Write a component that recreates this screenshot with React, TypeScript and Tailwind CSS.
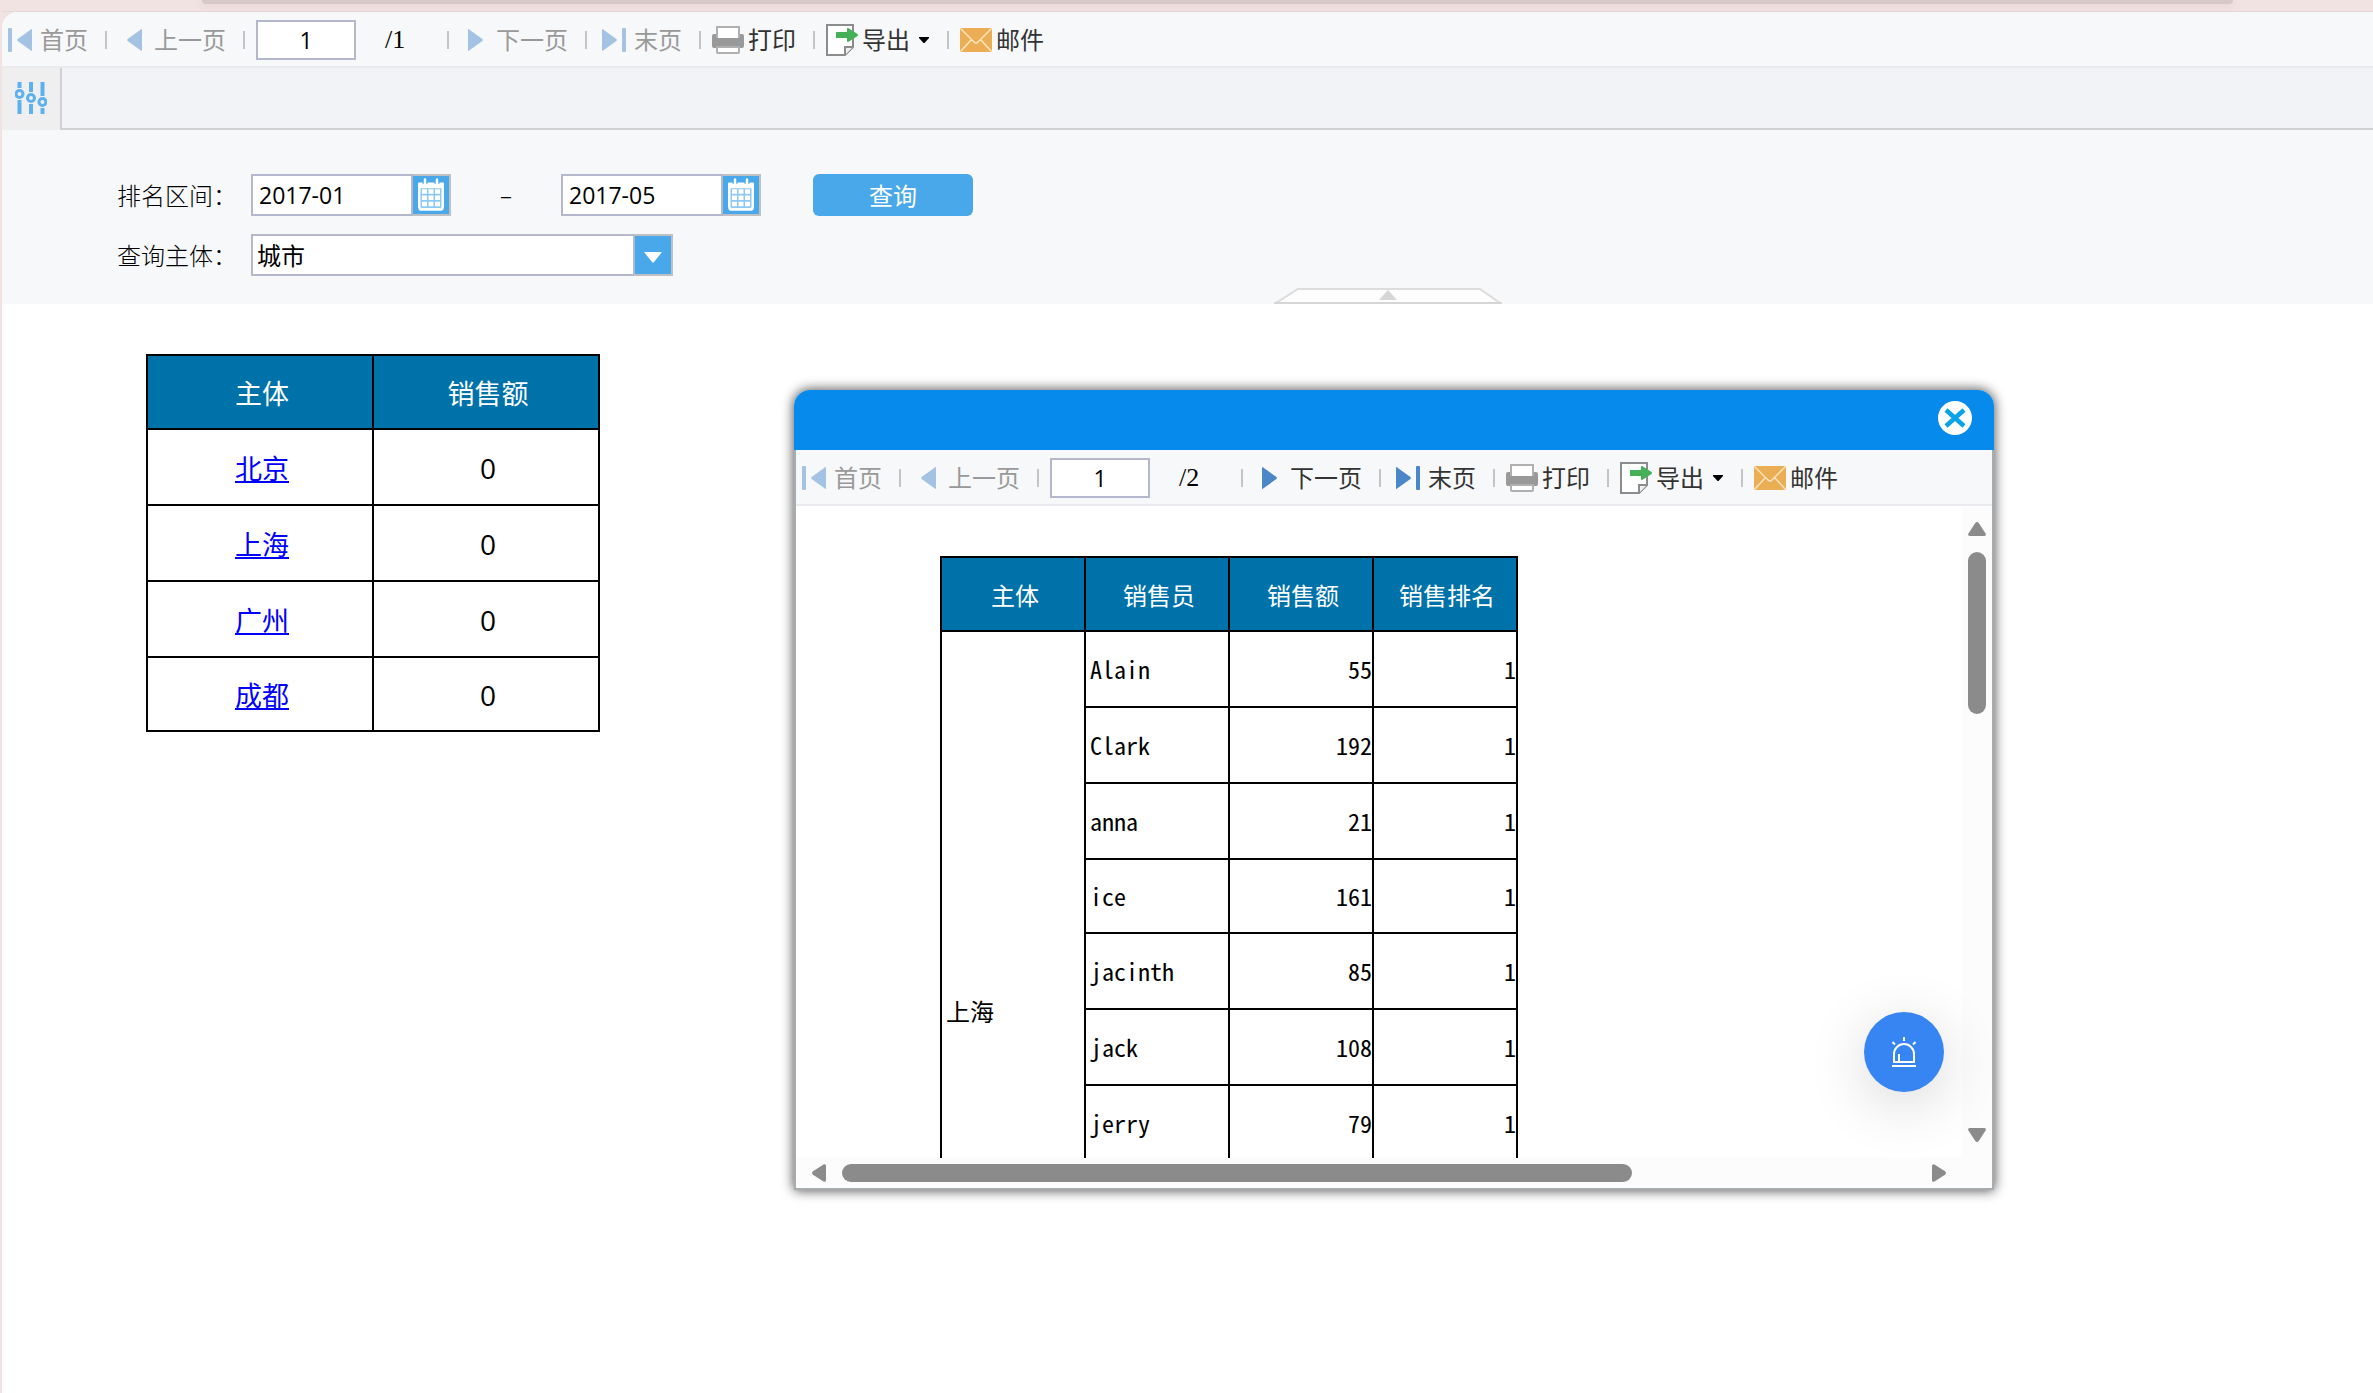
import type { ReactNode } from "react";
import clsx from "clsx";

const cities = ["北京", "上海", "广州", "成都"];

const sellers = [
    { name: "Alain", amount: 55, rank: 1 },
    { name: "Clark", amount: 192, rank: 1 },
    { name: "anna", amount: 21, rank: 1 },
    { name: "ice", amount: 161, rank: 1, short: true },
    { name: "jacinth", amount: 85, rank: 1 },
    { name: "jack", amount: 108, rank: 1 },
    { name: "jerry", amount: 79, rank: 1 },
];

function Icon({ children }: { children: ReactNode }) {
    return (
        <svg viewBox="0 0 32 32" className="size-8 shrink-0" aria-hidden="true">
            {children}
        </svg>
    );
}

function FirstIcon() {
    return (
        <Icon>
            <rect x="4" y="4" width="4" height="24" rx="1" fill="currentColor" />
            <path d="M28 5.5v21q0 .8-.8.3L13.6 17q-1-1 0-2L27.2 5.2q.8-.5.8.3z" fill="currentColor" />
        </Icon>
    );
}

function PrevIcon() {
    return (
        <Icon>
            <path d="M24 5.5v21q0 .8-.8.3L9.6 17q-1-1 0-2L23.2 5.2q.8-.5.8.3z" fill="currentColor" />
        </Icon>
    );
}

function NextIcon() {
    return (
        <Icon>
            <path d="M8 5.5v21q0 .8.8.3L22.4 17q1-1 0-2L8.8 5.2Q8 4.7 8 5.5z" fill="currentColor" />
        </Icon>
    );
}

function LastIcon() {
    return (
        <Icon>
            <path d="M4 5.5v21q0 .8.8.3L18.4 17q1-1 0-2L4.8 5.2q-.8-.5-.8.3z" fill="currentColor" />
            <rect x="24" y="4" width="4" height="24" rx="1" fill="currentColor" />
        </Icon>
    );
}

function PrintIcon() {
    return (
        <Icon>
            <path d="M0 12q0-2 2-2h28q2 0 2 2v10q0 2-2 2H2q-2 0-2-2z" fill="#999" />
            <path d="M4 2h24v12H4z" fill="#b0b0b0" />
            <path d="M6 4h20v10H6z" fill="#fff" />
            <path d="M4 22h24v6q0 2-2 2H6q-2 0-2-2z" fill="#b0b0b0" />
            <path d="M6 24h20v4H6z" fill="#fff" />
        </Icon>
    );
}

function ExportIcon() {
    return (
        <Icon>
            <path d="M1 1h26v22l-8 8H1z" fill="#fff" stroke="#8c8c8c" strokeWidth="2" />
            <path d="M19 31v-8h8" fill="#f0f0f0" stroke="#8c8c8c" strokeWidth="2" />
            <path d="M10 8h11V4.5q1-.8 2 0L31.500 10q1 1 0 2L23 17.500q-1 .8-2 0V14H10z" fill="#45b058" />
        </Icon>
    );
}

function MailIcon() {
    return (
        <Icon>
            <rect y="4" width="32" height="24" rx="2" fill="#ebae55" />
            <path d="M1 5l13 13q2 2 4 0L31 5M1 27l10.5-11.5M31 27L20.5 15.5" fill="none" stroke="#fbe6c4" strokeWidth="1.4" />
        </Icon>
    );
}

function CalendarIcon() {
    return (
        <svg viewBox="0 0 28 30" className="h-[34px] w-7" preserveAspectRatio="none" aria-hidden="true">
            <path d="M2 4h24q1 0 1 1v20q0 4-3 4H4q-3 0-3-4V5q0-1 1-1z" fill="#fff" />
            <path d="M3.5 9h21v16q0 1.5-1 1.5h-19q-1 0-1-1.5z" fill="#8cc9f3" />
            <path d="M5 10h5v4H5zM11.5 10h5v4h-5zM18 10h5v4h-5zM5 15.5h5v4H5zM11.5 15.5h5v4h-5zM18 15.5h5v4h-5zM5 21h5v4H5zM11.5 21h5v4h-5zM18 21h5v4h-5z" fill="#fff" />
            <path d="M8 1v4M20 1v4" stroke="#49a8ea" strokeWidth="5" />
            <path d="M8 1.5v3.5M20 1.5v3.5" stroke="#fff" strokeWidth="2.5" strokeLinecap="round" />
        </svg>
    );
}

function ToolButton({ icon, label, disabled, caret }: { icon: ReactNode; label: string; disabled?: boolean; caret?: boolean }) {
    return (
        <button
            type="button"
            disabled={disabled}
            className={clsx("flex shrink-0 items-center gap-1", disabled ? "text-[#a4c2e3]" : "text-[#4a86c8]")}
        >
            {icon}
            <span className={disabled ? "text-[#999]" : "text-[#333]"}>{label}</span>
            {caret && (
                <svg viewBox="0 0 12 6" className="ml-1 h-1.5 w-3" aria-hidden="true">
                    <path d="M1 0h10v1L6.5 6h-1L1 1z" fill="#000" />
                </svg>
            )}
        </button>
    );
}

function Separator() {
    return <span className="mr-[11px] ml-[17px] h-[18px] w-0.5 shrink-0 bg-[#c4c4c4]" />;
}

function Toolbar({ pages, hasNext }: { pages: number; hasNext?: boolean }) {
    return (
        <div className="flex h-14 items-center border-b-2 border-[#e9ebef] bg-[#f7f8fa] pt-0.5 pl-0.5 text-2xl leading-8">
            <ToolButton icon={<FirstIcon />} label="首页" disabled />
            <Separator />
            <ToolButton icon={<PrevIcon />} label="上一页" disabled />
            <Separator />
            <input
                type="text"
                aria-label="页码"
                defaultValue="1"
                className="h-10 w-[100px] shrink-0 border-2 border-[#b5b8cc] bg-white text-center text-[23px] text-black"
            />
            <span className="w-[74px] shrink-0 pl-[29px] font-['Liberation_Serif',serif] text-[26px] text-black">/{pages}</span>
            <Separator />
            <ToolButton icon={<NextIcon />} label="下一页" disabled={!hasNext} />
            <Separator />
            <ToolButton icon={<LastIcon />} label="末页" disabled={!hasNext} />
            <Separator />
            <ToolButton icon={<PrintIcon />} label="打印" />
            <Separator />
            <ToolButton icon={<ExportIcon />} label="导出" caret />
            <Separator />
            <ToolButton icon={<MailIcon />} label="邮件" />
        </div>
    );
}

function DateField({ id, value, label }: { id: string; value: string; label?: string }) {
    return (
        <div className="flex h-[42px] w-[200px]">
            <input
                id={id}
                type="text"
                aria-label={label}
                defaultValue={value}
                className="min-w-0 flex-1 border-2 border-[#b5b8cc] bg-white pl-1.5 text-[23px] text-black"
            />
            <button
                type="button"
                aria-label="选择日期"
                className="flex w-[38px] items-center justify-center border-y-2 border-r-2 border-[#bfc0c4] bg-[#49a8ea]"
            >
                <CalendarIcon />
            </button>
        </div>
    );
}

function FieldLabel({ htmlFor, children }: { htmlFor: string; children: ReactNode }) {
    return (
        <label htmlFor={htmlFor} className="w-[134px] font-['Noto_Sans_CJK_SC',sans-serif] font-light text-black">
            {children}
        </label>
    );
}

function QueryPanel() {
    return (
        <section className="relative flex h-[174px] flex-col gap-[18px] bg-[#f7f8fa] pt-11 pl-[115px] text-2xl">
            <div className="flex items-center">
                <FieldLabel htmlFor="from">排名区间：</FieldLabel>
                <DateField id="from" value="2017-01" />
                <span className="w-[110px] text-center font-light text-black">–</span>
                <DateField id="to" value="2017-05" label="结束区间" />
                <button type="button" className="ml-[52px] h-[42px] w-40 rounded-md bg-[#49a8ea] pt-0.5 text-white">
                    查询
                </button>
            </div>
            <div className="flex items-center">
                <FieldLabel htmlFor="subject">查询主体：</FieldLabel>
                <div className="relative h-[42px] w-[422px]">
                    <select
                        id="subject"
                        className="size-full appearance-none border-2 border-[#b5b8cc] bg-white pt-0.5 pl-1 text-black"
                    >
                        <option>城市</option>
                    </select>
                    <span className="pointer-events-none absolute inset-y-0 right-0 flex w-10 items-center justify-center border-2 border-[#bfc0c4] border-l-[#b5b8cc] bg-[#49a8ea]">
                        <svg viewBox="0 0 18 12" className="mt-1 h-3 w-[18px]" aria-hidden="true">
                            <path d="M0 1h18l-8 10q-1 1-2 0z" fill="#fff" />
                        </svg>
                    </span>
                </div>
            </div>
            <button type="button" aria-label="收起" className="absolute bottom-0 left-[1272px]">
                <svg viewBox="0 0 228 16" className="h-4 w-[228px]" aria-hidden="true">
                    <path d="M2 15L24 1h182l20 14z" fill="#fdfdfd" stroke="#dcdcdc" strokeWidth="2" />
                    <path d="M0 15h228" stroke="#d6d6d6" strokeWidth="2" />
                    <path d="M105 12l9-10 9 10z" fill="#d6d6d6" />
                </svg>
            </button>
        </section>
    );
}

function SummaryTable() {
    return (
        <table className="w-[454px] table-fixed border-collapse text-center text-[27px] leading-10 text-black">
            <thead>
                <tr className="h-[74px] bg-[#0072aa] text-white">
                    <th className="border-2 border-black pt-1 pl-1 font-normal">主体</th>
                    <th className="border-2 border-black pt-1 pl-1 font-normal">销售额</th>
                </tr>
            </thead>
            <tbody>
                {cities.map((city) => (
                    <tr key={city} className="h-[76px] last:h-[74px]">
                        <td className="border-2 border-black pt-1 pl-1">
                            <a
                                href="#detail"
                                className="text-[#0000ff] underline decoration-2 underline-offset-2 [text-decoration-skip-ink:none]"
                            >
                                {city}
                            </a>
                        </td>
                        <td className="border-2 border-black pt-0.5 pl-1 text-[28px]">0</td>
                    </tr>
                ))}
            </tbody>
        </table>
    );
}

function DetailTable() {
    return (
        <table className="w-[578px] table-fixed border-collapse text-2xl text-black">
            <thead>
                <tr className="h-[74px] bg-[#0072aa] text-white">
                    {["主体", "销售员", "销售额", "销售排名"].map((title) => (
                        <th key={title} className="border-2 border-black pt-1 pl-1 font-normal">{title}</th>
                    ))}
                </tr>
            </thead>
            <tbody className="font-['Noto_Sans_Mono_CJK_SC','Noto_Sans_CJK_SC',monospace]">
                {sellers.map((seller, i) => (
                    <tr key={seller.name} className={seller.short ? "h-[74px]" : "h-[76px]"}>
                        {i === 0 && (
                            <td rowSpan={sellers.length + 1} className="border-2 border-black pt-1 pl-1">上海</td>
                        )}
                        <td className="border-2 border-black pl-1">{seller.name}</td>
                        <td className="border-2 border-black text-right">{seller.amount}</td>
                        <td className="border-2 border-black text-right">{seller.rank}</td>
                    </tr>
                ))}
                <tr className="h-[226px]">
                    <td className="border-2 border-black" />
                    <td className="border-2 border-black" />
                    <td className="border-2 border-black" />
                </tr>
            </tbody>
        </table>
    );
}

function ScrollArrow({ className }: { className?: string }) {
    return (
        <svg viewBox="0 0 18 14" className={clsx("h-3.5 w-[18px] shrink-0", className)} aria-hidden="true">
            <path d="M7.3 1q1.7-2 3.4 0l6.900 10.5Q18.5 14 16 14H2Q-.5 14 .4 11.5z" fill="#8b8b8b" />
        </svg>
    );
}

function DetailDialog() {
    return (
        <div
            role="dialog"
            aria-label="销售明细"
            className="absolute top-[378px] left-[792px] flex h-[800px] w-[1200px] flex-col rounded-t-[16px] rounded-b-[4px] shadow-[0_0_12px_1px_rgba(0,0,0,0.65)]"
        >
            <div className="flex h-[60px] shrink-0 items-start justify-end rounded-t-[16px] bg-[#068bed] pt-[11px] pr-[22px]">
                <button type="button" aria-label="关闭">
                    <svg viewBox="0 0 34 34" className="size-[34px]" aria-hidden="true">
                        <circle cx="17" cy="17" r="17" fill="#fff" />
                        <path d="M8 9l18 16M26 9L8 25" stroke="#0aa2e8" strokeWidth="4.5" />
                    </svg>
                </button>
            </div>
            <div className="flex min-h-0 flex-1 flex-col border-x-2 border-b-2 border-[#a7acae] bg-[#fcfcfc]">
                <Toolbar pages={2} hasNext />
                <div className="flex min-h-0 flex-1">
                    <div className="flex-1 overflow-hidden bg-white pt-[50px] pl-36">
                        <DetailTable />
                    </div>
                    <div className="flex w-[30px] flex-col items-center py-4">
                        <ScrollArrow />
                        <div className="mt-4 h-[162px] w-[18px] rounded-full bg-[#8b8b8b]" />
                        <ScrollArrow className="mt-auto rotate-180" />
                    </div>
                </div>
                <div className="mr-[30px] flex h-[30px] items-center px-3.5">
                    <ScrollArrow className="-rotate-90" />
                    <div className="ml-3.5 h-[18px] w-[790px] rounded-full bg-[#8b8b8b]" />
                    <ScrollArrow className="ml-auto rotate-90" />
                </div>
            </div>
            <button
                type="button"
                aria-label="提醒"
                className="absolute right-[50px] bottom-[98px] flex size-20 items-center justify-center rounded-full bg-[#3785f2] shadow-[0_12px_60px_rgba(0,0,0,0.16)]"
            >
                <svg viewBox="0 0 26 30" className="h-[30px] w-[26px]" fill="none" stroke="#fff" strokeWidth="2" aria-hidden="true">
                    <path d="M3 25V17a10 10 0 0 1 20 0v8z" />
                    <path d="M1 29h24M8 24v-7M13 0v4M1.5 5l2.5 2.5M24.5 5L22 7.5" />
                </svg>
            </button>
        </div>
    );
}

export default function App() {
    return (
        <main className="min-h-screen bg-[#f1e3e2] pl-0.5 font-['Open_Sans','Noto_Sans_CJK_SC',sans-serif]">
            <div className="h-3 overflow-hidden border-b border-[#e5d7d6]">
                <div className="mr-[140px] ml-[200px] h-1 rounded-b-[16px] bg-[#d7c9c8] shadow-[0_0_10px_rgba(160,120,120,0.25)]" />
            </div>
            <div className="relative min-h-[calc(100vh-12px)] rounded-tl-[16px] bg-white">
                <div className="overflow-hidden rounded-tl-[16px]">
                    <Toolbar pages={1} />
                </div>
                <div className="flex h-[62px]">
                    <button
                        type="button"
                        aria-label="参数面板"
                        className="flex w-[60px] items-center justify-center border-r-2 border-[#d0d1d5] bg-[#efefef]"
                    >
                        <svg viewBox="0 0 32 32" className="mb-0.5 size-8" fill="none" stroke="#5db1ee" strokeWidth="4" aria-hidden="true">
                            <path d="M4.5 0v6M4.5 18v14M16 0v10M16 22v10M27.5 0v14M27.5 26v6" />
                            <circle cx="4.5" cy="12" r="3.5" strokeWidth="3" />
                            <circle cx="16" cy="16" r="3.5" strokeWidth="3" />
                            <circle cx="27.5" cy="20" r="3.5" strokeWidth="3" />
                        </svg>
                    </button>
                    <div className="flex-1 border-b-2 border-[#d0d1d5] bg-[#f2f3f7]" />
                </div>
                <QueryPanel />
                <div className="pt-[50px] pl-36">
                    <SummaryTable />
                </div>
                <DetailDialog />
            </div>
        </main>
    );
}
